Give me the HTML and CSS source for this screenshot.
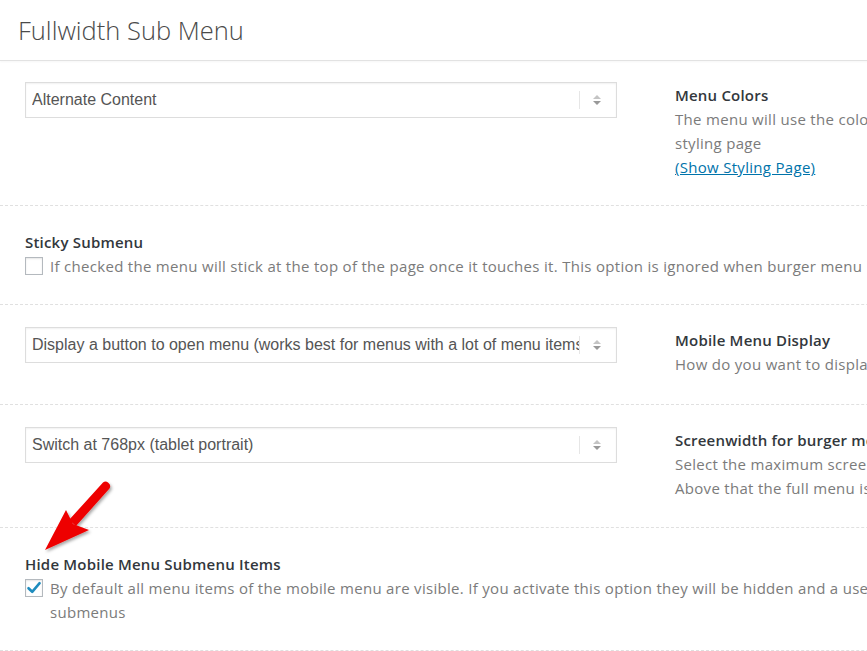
FILE: index.html
```html
<!DOCTYPE html>
<html lang="en">
<head>
    <meta charset="UTF-8">
    <meta name="viewport" content="width=device-width, initial-scale=1.0">
    <title>Fullwidth Sub Menu</title>
    <link rel="stylesheet" href="styles.css">
</head>
<body>
    <div class="panel">
        <div class="panel-header">
            <h1>Fullwidth Sub Menu</h1>
        </div>

        <div class="option-row first">
            <div class="option-field">
                <div class="fake-select">
                    <span class="fake-select-value">Alternate Content</span>
                    <span class="fake-select-arrows"></span>
                </div>
            </div>
            <div class="option-info">
                <div class="option-title">Menu Colors</div>
                <div class="option-desc">
                    The menu will use the colors of the fullwidth menu defined on the<br>
                    styling page<br>
                    <a href="#">(Show Styling Page)</a>
                </div>
            </div>
        </div>

        <div class="option-row full">
            <div class="option-title">Sticky Submenu</div>
            <label class="check-line">
                <span class="checkbox"></span>
                <span class="option-desc">If checked the menu will stick at the top of the page once it touches it. This option is ignored when burger menu icon is displayed.</span>
            </label>
        </div>

        <div class="option-row">
            <div class="option-field">
                <div class="fake-select">
                    <span class="fake-select-value">Display a button to open menu (works best for menus with a lot of menu items)</span>
                    <span class="fake-select-arrows"></span>
                </div>
            </div>
            <div class="option-info">
                <div class="option-title">Mobile Menu Display</div>
                <div class="option-desc">How do you want to display the menu on mobile devices</div>
            </div>
        </div>

        <div class="option-row">
            <div class="option-field">
                <div class="fake-select">
                    <span class="fake-select-value">Switch at 768px (tablet portrait)</span>
                    <span class="fake-select-arrows"></span>
                </div>
            </div>
            <div class="option-info">
                <div class="option-title">Screenwidth for burger menu button</div>
                <div class="option-desc">
                    Select the maximum screen width for the burger menu button.<br>
                    Above that the full menu is displayed
                </div>
            </div>
        </div>

        <div class="option-row full">
            <div class="option-title">Hide Mobile Menu Submenu Items</div>
            <label class="check-line">
                <span class="checkbox checked">
                    <svg viewBox="0 0 18 18" width="18" height="18"><path d="M3.5 9.2 L7.2 12.8 L14.6 4.2" fill="none" stroke="#1e8cbe" stroke-width="2.6" stroke-linecap="round" stroke-linejoin="round"/></svg>
                </span>
                <span class="option-desc">By default all menu items of the mobile menu are visible. If you activate this option they will be hidden and a user has to click to open the<br>submenus</span>
            </label>
        </div>

        <!-- annotation arrow drawn over the page -->
        <svg class="callout-arrow" width="120" height="100" viewBox="0 0 120 100">
            <defs>
                <filter id="arrowShadow" x="-20%" y="-20%" width="140%" height="140%">
                    <feDropShadow dx="1.5" dy="2" stdDeviation="1.5" flood-color="#000" flood-opacity="0.35"/>
                </filter>
            </defs>
            <g filter="url(#arrowShadow)" fill="#ee0000">
                <path d="M104 8.5 Q107.5 11 105.5 14.5 L72 52 L65 46 L99 8.5 Q101.5 6.5 104 8.5 Z"/>
                <path d="M41 76 L62 36 L69 50 L85 56 Z"/>
            </g>
        </svg>
    </div>
</body>
</html>
```

FILE: styles.css
```css
body {
    margin: 0;
    padding: 0;
    background-color: #fff;
    font-family: "Open Sans", Arial, sans-serif;
    overflow: hidden;
}
.panel {
    position: relative;
    width: 1400px;
}
.panel-header {
    height: 60px;
    border-bottom: 1px solid #e2e2e2;
    box-shadow: 0 1px 2px rgba(0, 0, 0, 0.04);
    padding: 0 18px;
    display: flex;
    align-items: center;
}
.panel-header h1 {
    margin: 0;
    font-size: 25.5px;
    font-weight: 300;
    color: #4a4a4a;
}
.option-row {
    display: flex;
    gap: 58px;
    padding: 22px 25px 27px;
    border-bottom: 1px dashed #e0e0e0;
}
.option-row.first {
    padding-top: 21px;
    padding-bottom: 26px;
}
.option-row.full {
    display: block;
    padding-top: 24px;
    padding-bottom: 26px;
}
.option-field {
    width: 592px;
    flex-shrink: 0;
    padding-bottom: 14px;
}
.option-info {
    padding-top: 1px;
    white-space: nowrap;
}
.option-title {
    font-size: 15px;
    font-weight: 600;
    letter-spacing: 0.2px;
    color: #32373c;
    line-height: 24px;
}
.option-desc {
    font-size: 15px;
    letter-spacing: 0.3px;
    color: #7b7b7b;
    line-height: 24px;
}
.option-desc a {
    color: #0073aa;
}
.fake-select {
    height: 36px;
    box-sizing: border-box;
    border: 1px solid #ddd;
    box-shadow: inset 0 1px 2px rgba(0, 0, 0, 0.06);
    display: flex;
    align-items: center;
    padding-left: 6px;
    font-family: "Liberation Sans", Arial, sans-serif;
    font-size: 16px;
    color: #555;
}
.fake-select-value {
    flex: 1;
    overflow: hidden;
    white-space: nowrap;
    padding-right: 6px;
}
.fake-select-arrows {
    width: 36px;
    height: 18px;
    border-left: 1px solid #e6e6e6;
    flex-shrink: 0;
    position: relative;
}
.fake-select-arrows::before,
.fake-select-arrows::after {
    content: "";
    position: absolute;
    left: 13px;
    border-left: 4px solid transparent;
    border-right: 4px solid transparent;
}
.fake-select-arrows::before {
    top: 4px;
    border-bottom: 4px solid #c4c4c4;
}
.fake-select-arrows::after {
    top: 10px;
    border-top: 4px solid #999;
}
.check-line {
    display: flex;
    align-items: flex-start;
    gap: 7px;
}
.check-line .option-desc {
    white-space: nowrap;
}
.checkbox {
    width: 18px;
    height: 18px;
    box-sizing: border-box;
    border: 1px solid #b4b9be;
    box-shadow: inset 0 1px 2px rgba(0, 0, 0, 0.1);
    background-color: #fff;
    margin-top: 3px;
    flex-shrink: 0;
    position: relative;
}
.checkbox svg {
    position: absolute;
    left: -1px;
    top: -1px;
}
.callout-arrow {
    position: absolute;
    left: 4px;
    top: 474px;
}
```
